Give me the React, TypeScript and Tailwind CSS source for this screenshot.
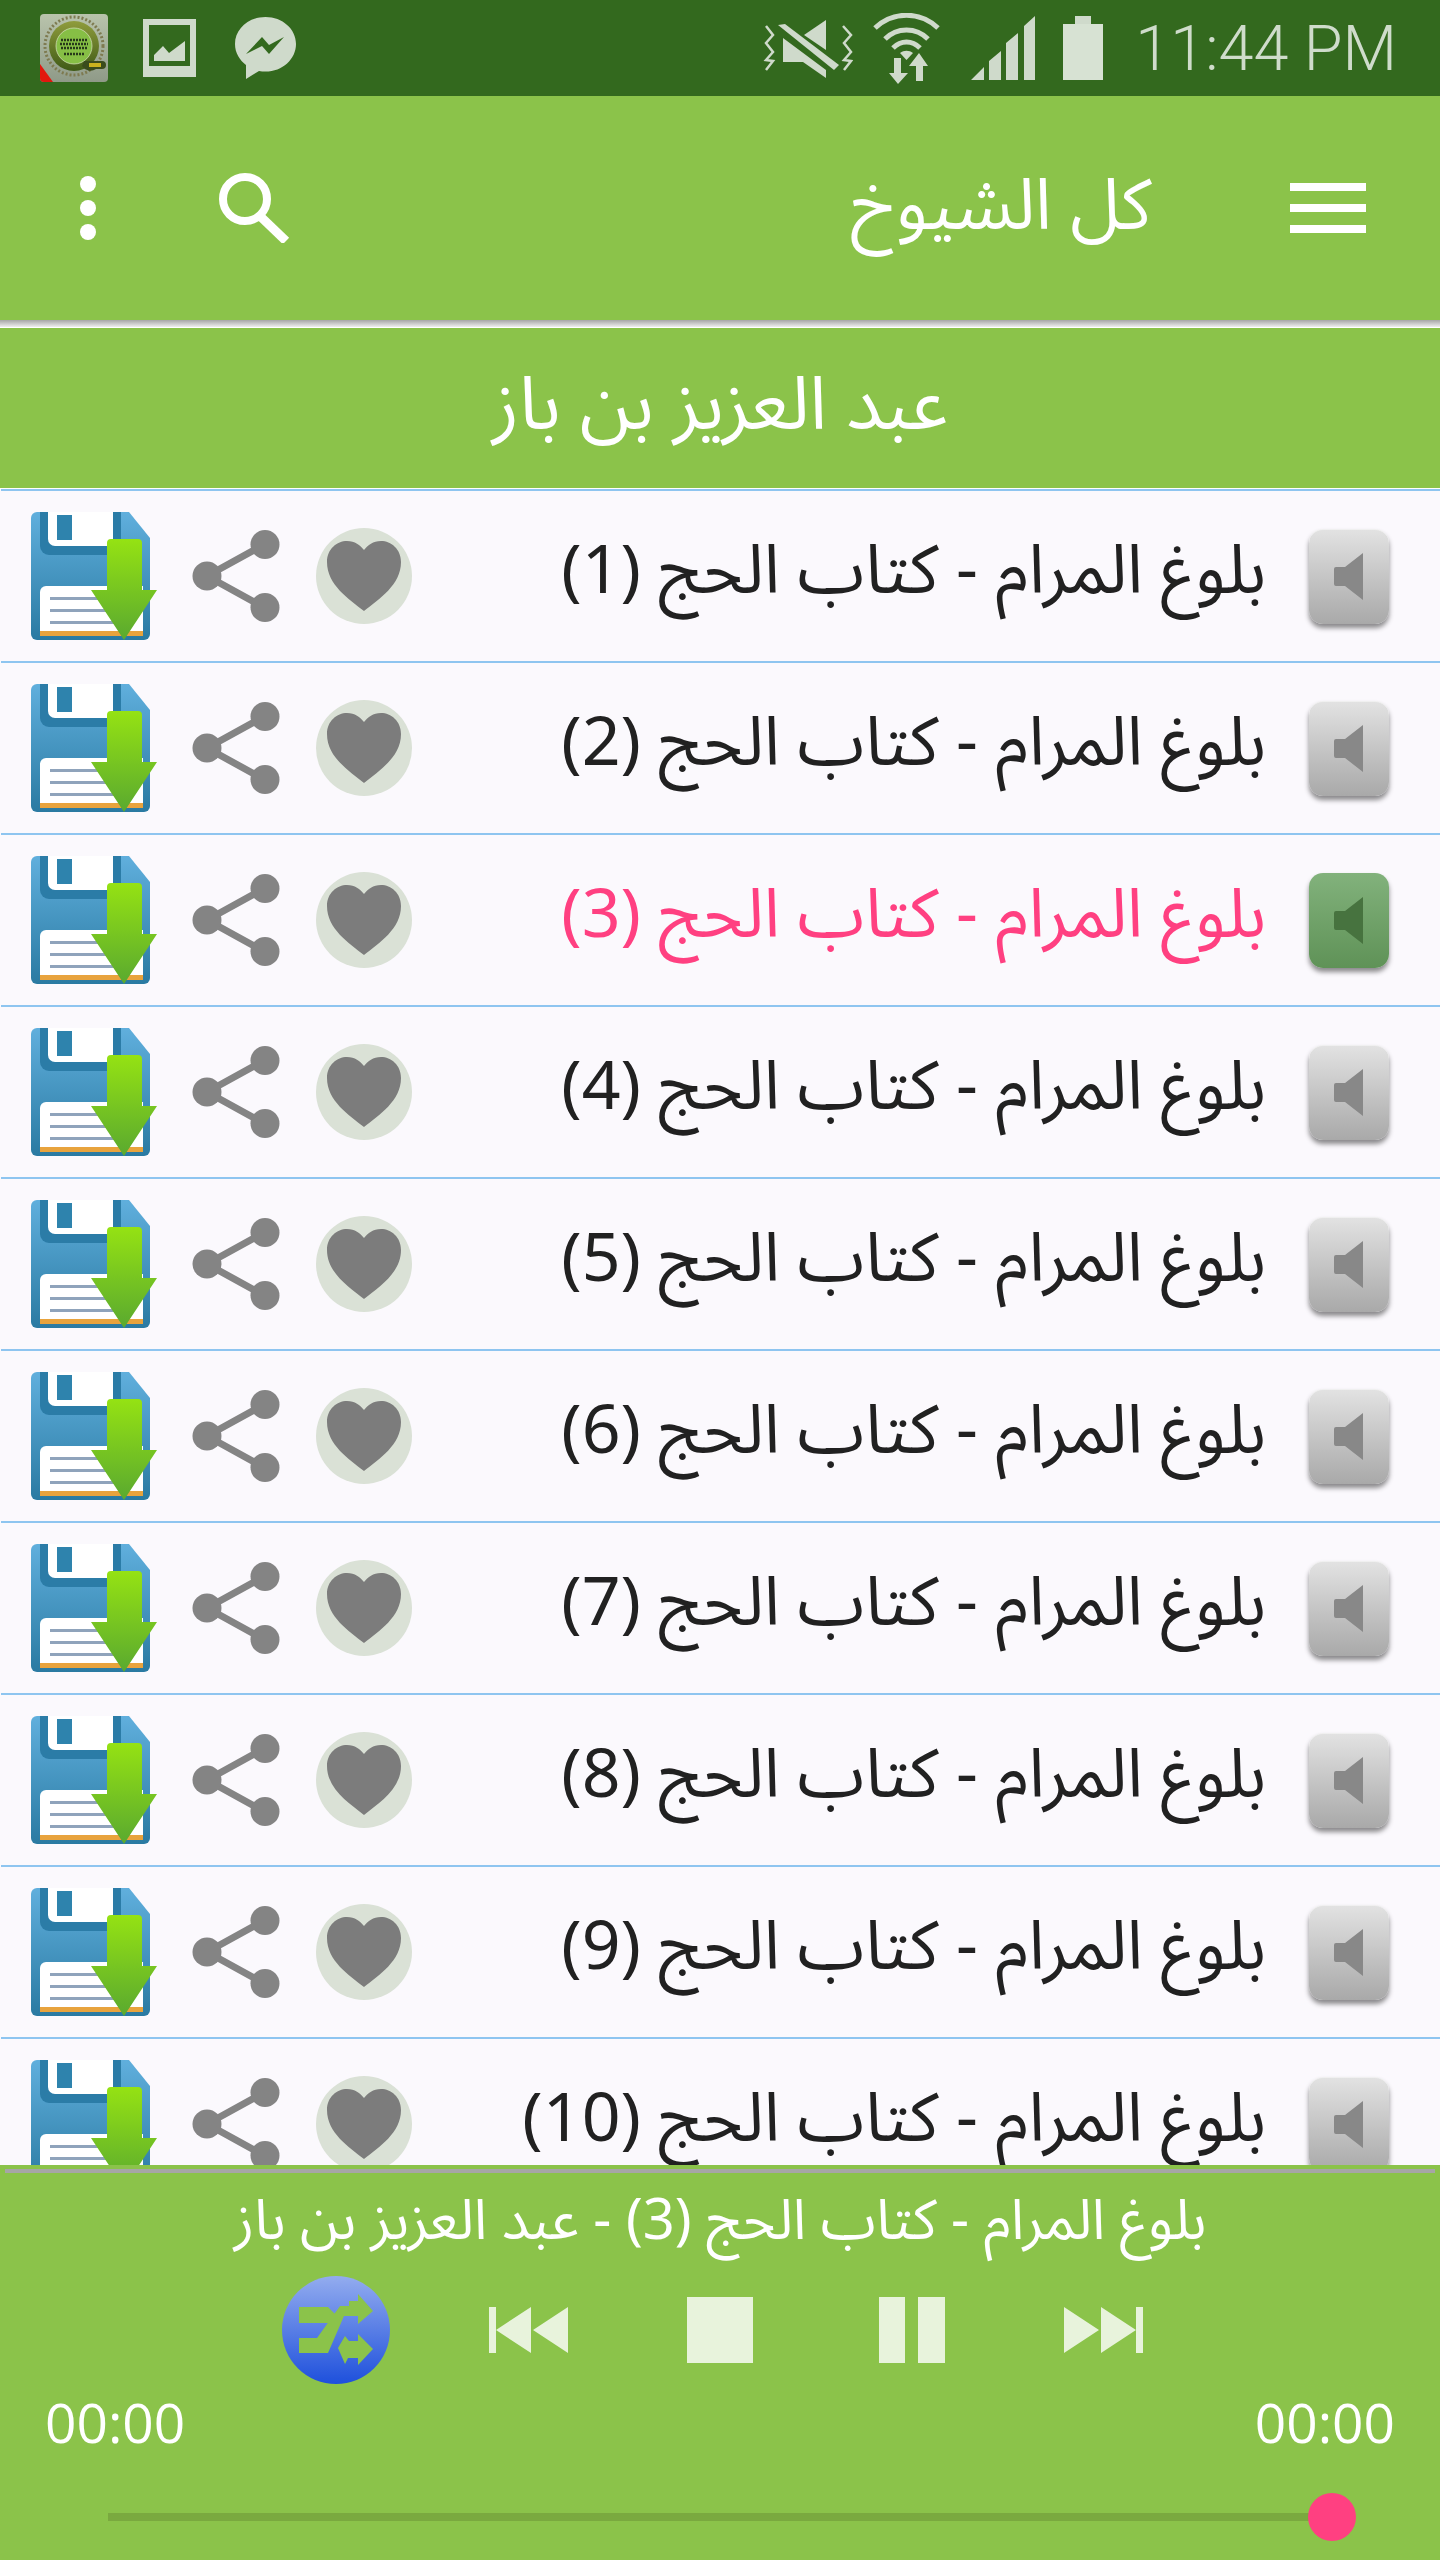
import React from "react";

const AR = "font-['Noto_Sans_Arabic','Noto_Naskh_Arabic','Droid_Arabic_Naskh','DejaVu_Sans',sans-serif]";

function AppLogo() {
  return (
    <svg width="68" height="68" viewBox="0 0 68 68" className="shrink-0">
      <defs>
        <linearGradient id="lg" x1="0" y1="0" x2="0" y2="1"><stop offset="0" stopColor="#b9c4ac" /><stop offset="1" stopColor="#8f9a88" /></linearGradient>
        <linearGradient id="lr" x1="0" y1="0" x2="0" y2="1"><stop offset="0" stopColor="#8f9c3c" /><stop offset="1" stopColor="#3f5a16" /></linearGradient>
      </defs>
      <rect width="68" height="68" rx="4" fill="url(#lg)" />
      <circle cx="34" cy="32" r="29" fill="none" stroke="#7e7a50" strokeWidth="3" strokeDasharray="2 2" />
      <circle cx="34" cy="32" r="25" fill="url(#lr)" />
      <circle cx="34" cy="32" r="18" fill="#86bf45" stroke="#d8e2c0" strokeWidth="0.7" />
      <path d="M21 26h26M20 30h28M21 34h26M24 40h20" stroke="#27391a" strokeWidth="2.4" strokeDasharray="2 1" />
      <path d="M44 47h18a4 4 0 0 1 0 8h-6a10 10 0 0 1-14-3z" fill="#3a4c1c" />
      <rect x="49" y="49" width="12" height="4" fill="#c9b21e" />
      <path d="M0 50L13 68H4a4 4 0 0 1-4-4z" fill="#e2170e" />
    </svg>
  );
}

function ImageIcon() {
  return (
    <svg width="53" height="58" viewBox="0 0 53 58" className="shrink-0">
      <path fillRule="evenodd" d="M0 0h53v58H0zM6 6v41h41V6z" fill="#cfdacb" />
      <path d="M11 42v-6l9-9 6 7 16-12v20z" fill="#cfdacb" />
    </svg>
  );
}

function Messenger() {
  return (
    <svg width="61" height="62" viewBox="0 0 61 62" className="shrink-0">
      <path d="M30.5 0C13.5 0 0 12 0 27c0 9 4.7 16 11 21v14l13-8c2 .5 4.500.6 6.500.6C47.500 54.600 61 42 61 27S47.500 0 30.500 0z" fill="#cfdacb" />
      <path d="M11 37l16-17 7 8 15-8-15 17-7-8z" fill="#33691e" />
    </svg>
  );
}

function MuteIcon() {
  return (
    <svg width="92" height="59" viewBox="0 0 92 59" className="shrink-0" fill="none">
      <path d="M5 7l7 9-7 8 7 9-7 8 7 1-7 9" stroke="#cfdacb" strokeWidth="2.500" />
      <path d="M82 7l8 9-7 8 7 9-7 8 7 1-7 9" stroke="#cfdacb" strokeWidth="2.500" />
      <path d="M65 1L43 16l22 15z" fill="#cfdacb" />
      <path d="M22 19v24h20l23 16v-8z" fill="#cfdacb" />
      <path d="M17 6l7-1 54 41-5 5z" fill="#cfdacb" />
    </svg>
  );
}

function WifiIcon() {
  return (
    <svg width="67" height="71" viewBox="0 0 67 71" className="shrink-0" fill="none">
      <path d="M2 15C20 -2 47 -2 65 15" stroke="#cfdacb" strokeWidth="5" />
      <path d="M12 26C24 14 43 14 55 26" stroke="#cfdacb" strokeWidth="5" />
      <path d="M20 35C28 27 39 27 47 35" stroke="#cfdacb" strokeWidth="5" />
      <path d="M27 40c4-3 9-3 13 0l-6.500 7z" fill="#cfdacb" />
      <path d="M21 45h7v15h7L25 71 16 60h5z" fill="#cfdacb" />
      <path d="M36 53l10-13 9 13h-5v15h-7V53z" fill="#cfdacb" />
    </svg>
  );
}

function SignalIcon() {
  return (
    <svg width="64" height="64" viewBox="0 0 64 64" className="shrink-0">
      <path d="M0 64l13-13v13zM18 45l12-10v29H18zM35 27l12-10v47H35zM53 10L64 0v64H53z" fill="#cfdacb" />
    </svg>
  );
}

function Battery() {
  return (
    <svg width="40" height="64" viewBox="0 0 40 64" className="shrink-0">
      <path d="M12 0h16v8H12z" fill="#cfdacb" />
      <rect y="8" width="40" height="56" fill="#d7e2d3" />
    </svg>
  );
}

function SaveIcon() {
  return (
    <svg width="126" height="128" viewBox="0 0 126 128" className="shrink-0">
      <defs>
        <linearGradient id="sb" x1="0" y1="0" x2="0" y2="1"><stop offset="0" stopColor="#60afdd" /><stop offset="1" stopColor="#2a7aa2" /></linearGradient>
        <linearGradient id="sg" x1="0" y1="0" x2="0" y2="1"><stop offset="0" stopColor="#95e213" /><stop offset="1" stopColor="#5aa92f" /></linearGradient>
      </defs>
      <path d="M6 0h92l21 26v96a6 6 0 0 1-6 6H6a6 6 0 0 1-6-6V6a6 6 0 0 1 6-6z" fill="url(#sb)" />
      <path d="M9 0h81v34a9 9 0 0 1-9 9H18a9 9 0 0 1-9-9z" fill="#2b7ca7" />
      <path d="M17 0h65v34H24a7 7 0 0 1-7-7z" fill="#fff" />
      <rect x="26" y="3" width="15" height="25" fill="#2e83ad" />
      <path d="M9 80a6 6 0 0 1 6-6h97v45H9z" fill="#fff" />
      <rect x="9" y="119" width="103" height="5" fill="#e8a33d" />
      <path d="M19 85h70v3H19zM19 97h70v3H19zM19 109h70v3H19z" fill="#8fa3bb" />
      <path d="M76 31a4 4 0 0 1 4-4h27a4 4 0 0 1 4 4v47h15l-33 50-33-50h16z" fill="url(#sg)" />
    </svg>
  );
}

function ShareIcon() {
  return (
    <svg width="88" height="92" viewBox="0 0 88 92" className="shrink-0" fill="#848484">
      <path d="M15 46L73 14M15 46l58 32" stroke="#848484" strokeWidth="7" />
      <circle cx="15" cy="46" r="14.500" />
      <circle cx="73" cy="14.500" r="14.500" />
      <circle cx="73" cy="77.500" r="14.500" />
    </svg>
  );
}

function HeartIcon() {
  return (
    <div className="flex h-24 w-24 shrink-0 items-center justify-center rounded-full bg-[#dae1d6]">
      <svg width="74" height="70" viewBox="0 0 74 70">
        <path d="M37 70C22 58 0 44 0 21 0 8 10 0 20 0c8 0 13 4 17 9 4-5 9-9 17-9 10 0 20 8 20 21 0 23-22 37-37 49z" fill="#7c7c7c" />
      </svg>
    </div>
  );
}

function SpeakerButton({ active }: { active: boolean }) {
  return (
    <div className={active
      ? "flex h-[95px] w-20 shrink-0 items-center justify-center rounded-[14px] bg-linear-to-b from-[#82b27c] to-[#5f9257] shadow-[0_4px_5px_rgba(0,0,0,0.45)]"
      : "flex h-[95px] w-20 shrink-0 items-center justify-center rounded-[14px] border-t border-t-[#f0f0f0] bg-linear-to-b from-[#e2e2e2] to-[#a9a9a9] shadow-[0_4px_5px_rgba(0,0,0,0.45)]"}>
      <svg width="29" height="47" viewBox="0 0 29 47" className="-translate-x-px">
        <path d="M29 0v47L11 33H2a2 2 0 0 1-2-2V16a2 2 0 0 1 2-2h9z" fill={active ? "#47733f" : "#888888"} />
      </svg>
    </div>
  );
}

function Row({ n, active }: { n: number; active: boolean }) {
  return (
    <div className="ml-px flex h-[172px] shrink-0 items-center border-t-2 border-t-[#8ec5f0] pl-[30px]">
      <SaveIcon />
      <div className="ml-[35px]"><ShareIcon /></div>
      <div className="ml-[36px]"><HeartIcon /></div>
      <div dir="rtl" lang="ar" className={`${AR} mb-2 flex-1 text-right text-[68px] leading-none whitespace-nowrap ${active ? "text-[#ff4081]" : "text-[#212121]"}`}>
        {`بلوغ المرام - كتاب الحج (${n})`}
      </div>
      <div className="ml-[43px] mr-[51px]"><SpeakerButton active={active} /></div>
    </div>
  );
}

function Controls() {
  const c = "#e8f3dc";
  return (
    <div className="mt-[19px] flex h-[108px] items-center pl-[282px]">
      <svg width="108" height="108" viewBox="0 0 108 108" className="shrink-0">
        <defs>
          <linearGradient id="bl" x1="0" y1="0" x2="0" y2="1"><stop offset="0" stopColor="#93acef" /><stop offset="1" stopColor="#1e50dc" /></linearGradient>
        </defs>
        <circle cx="54" cy="54" r="54" fill="url(#bl)" />
        <path d="M17 31h29l7 7-7 9H17zM17 62h18l23-32h9v-5h9v-7l15 17-15 13v-8H62L46 77H17zM56 72l7-12 4 5h9v-7l15 15-15 16v-7H66l-3 6z" fill="#8bc34a" />
      </svg>
      <svg width="79" height="46" viewBox="0 0 79 46" className="ml-[99px] shrink-0" fill={c}>
        <path d="M0 0h7v46H0zM7 23L42 0v46zM44 23L79 0v46z" />
      </svg>
      <div className="ml-[119px] h-[66px] w-[66px] shrink-0 bg-[#e8f3dc]" />
      <div className="ml-[126px] flex shrink-0 gap-[13px]">
        <div className="h-[66px] w-[26px] bg-[#e8f3dc]" />
        <div className="h-[66px] w-[27px] bg-[#e8f3dc]" />
      </div>
      <svg width="79" height="46" viewBox="0 0 79 46" className="ml-[119px] shrink-0" fill={c}>
        <path d="M0 0l35 23L0 46zM37 0l35 23-35 23zM72 0h7v46h-7z" />
      </svg>
    </div>
  );
}

export default function App() {
  return (
    <div className="flex h-[2560px] w-[1440px] flex-col overflow-hidden bg-[#fbf9fd]">
      <header className="flex h-24 shrink-0 items-center bg-[#33691e] pl-10 pr-[43px]">
        <AppLogo />
        <div className="ml-[35px]"><ImageIcon /></div>
        <div className="ml-[39px]"><Messenger /></div>
        <div className="flex-1" />
        <MuteIcon />
        <div className="ml-5"><WifiIcon /></div>
        <div className="ml-[31px]"><SignalIcon /></div>
        <div className="ml-7"><Battery /></div>
        <span className="ml-8 font-['Roboto',sans-serif] text-[63px] leading-none font-light whitespace-nowrap text-[#cfdccb]">11:44 PM</span>
      </header>

      <div className="flex h-56 shrink-0 items-center bg-[#8bc34a] pl-20">
        <div className="flex flex-col gap-2">
          <div className="h-4 w-4 rounded-full bg-white" />
          <div className="h-4 w-4 rounded-full bg-white" />
          <div className="h-4 w-4 rounded-full bg-white" />
        </div>
        <svg width="71" height="70" viewBox="0 0 71 70" className="ml-[123px] shrink-0" fill="none">
          <circle cx="26" cy="26" r="22" stroke="#fff" strokeWidth="8" />
          <path d="M42 44l25 24" stroke="#fff" strokeWidth="9" />
        </svg>
        <div dir="rtl" lang="ar" className={`${AR} mb-1 ml-[560px] w-[302px] text-center text-[71px] leading-none whitespace-nowrap text-white`}>كل الشيوخ</div>
        <div className="ml-[138px] flex w-[76px] flex-col gap-[13px]">
          <div className="h-2 bg-white" />
          <div className="h-2 bg-white" />
          <div className="h-2 bg-white" />
        </div>
      </div>

      <div className="h-[7px] shrink-0 bg-linear-to-b from-[#a6a6a6] to-[#efefef]" />
      <div className="h-px shrink-0 bg-white" />

      <div dir="rtl" lang="ar" className={`${AR} flex h-40 shrink-0 items-center justify-center bg-[#8bc34a] pb-1 text-[74px] leading-none whitespace-nowrap text-white`}>عبد العزيز بن باز</div>
      <div className="h-px shrink-0 bg-white" />

      <div className="flex min-h-0 flex-1 flex-col overflow-hidden">
        {Array.from({ length: 10 }, (_, i) => (
          <Row key={i} n={i + 1} active={i === 2} />
        ))}
      </div>

      <footer className="h-[395px] shrink-0 bg-[#8bc34a] pt-1">
        <div className="mx-[5px] h-1 bg-[#a6a6a6]" />
        <div dir="rtl" lang="ar" className={`${AR} mt-3 h-[72px] text-center text-[56px] leading-[72px] whitespace-nowrap text-white`}>بلوغ المرام - كتاب الحج (3) - عبد العزيز بن باز</div>
        <Controls />
        <div className="mt-[17px] flex justify-between px-[45px] font-['Open_Sans',sans-serif] text-[55px] leading-[42px] font-normal text-white">
          <span>00:00</span>
          <span>00:00</span>
        </div>
        <div className="relative mx-[108px] mt-[70px] h-2 w-[1210px] bg-[#7aa93f]">
          <div className="absolute top-[-20px] left-[1200px] h-12 w-12 rounded-full bg-[#ff4081]" />
        </div>
      </footer>
    </div>
  );
}
